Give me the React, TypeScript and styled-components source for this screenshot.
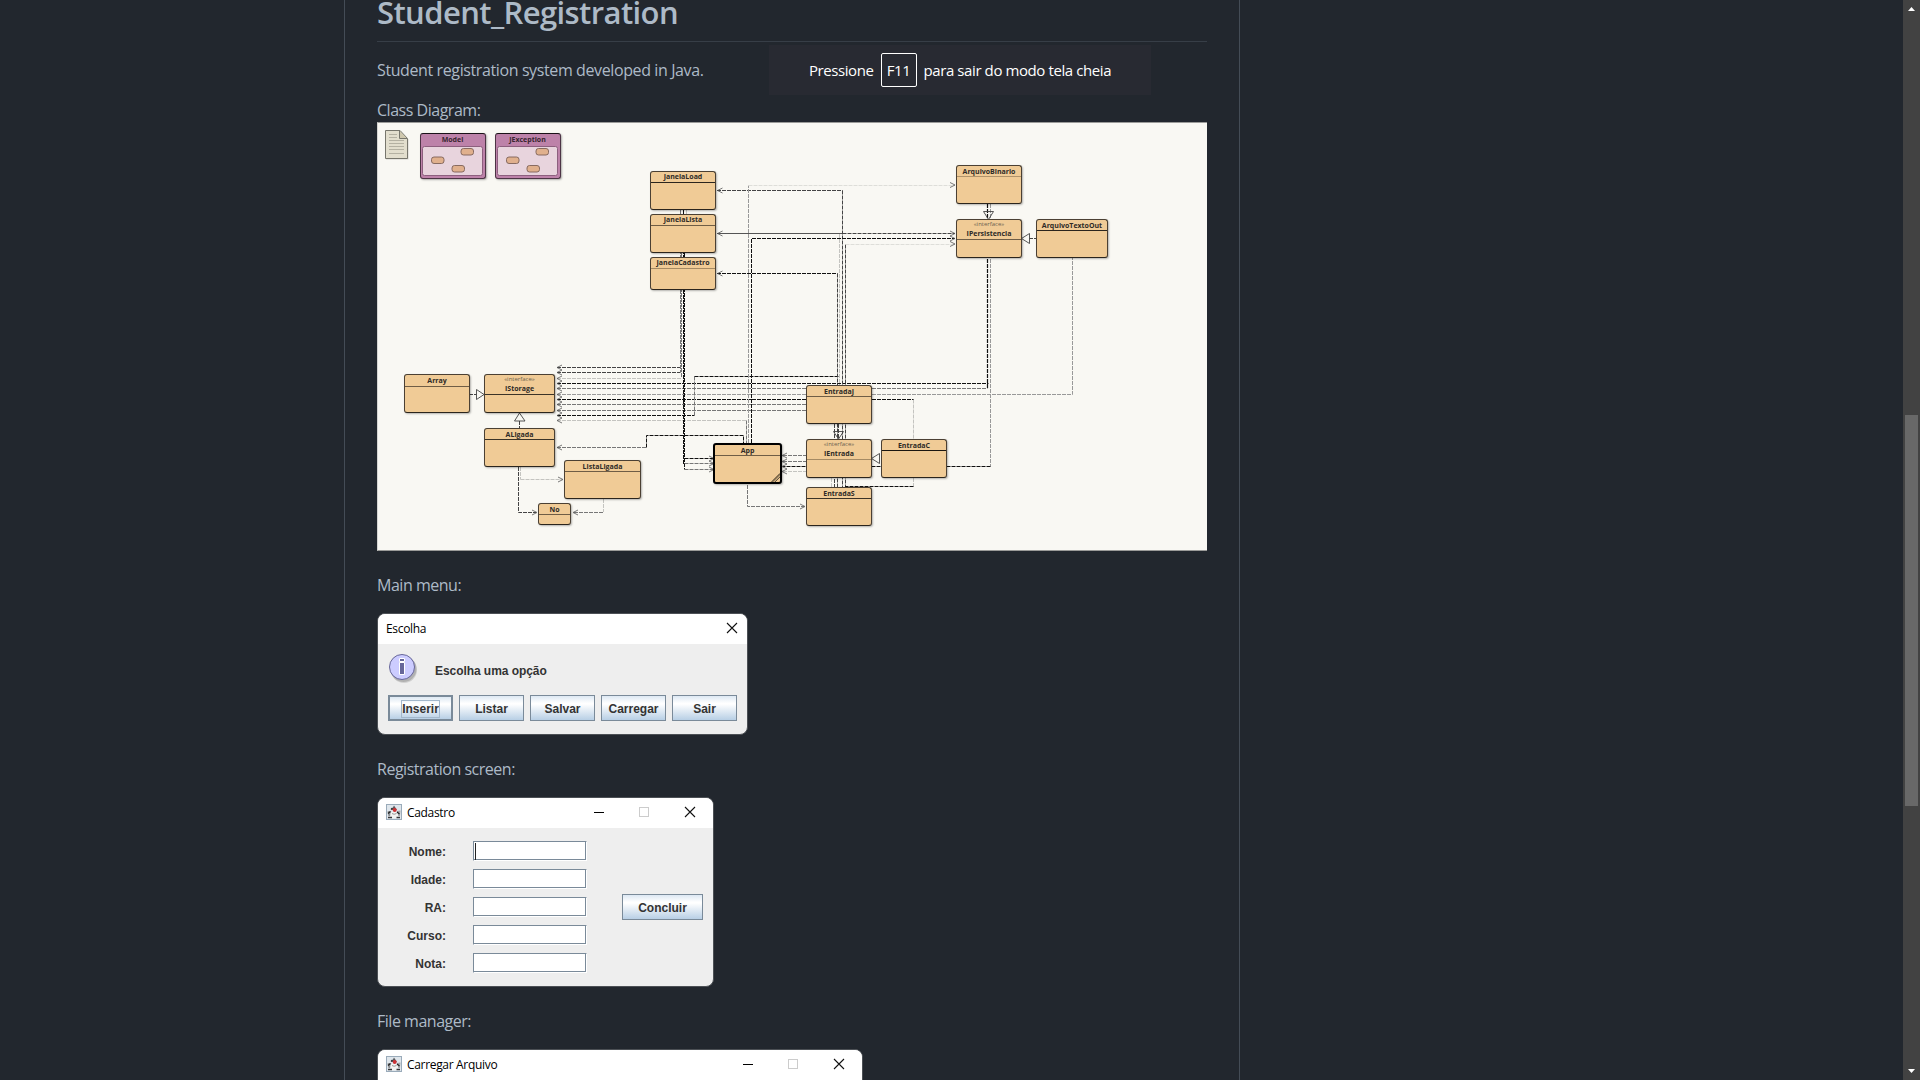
import React from 'react';
import styled, { createGlobalStyle, css } from 'styled-components';

const ui = `'Open Sans', 'Noto Sans', sans-serif`;
const swing = `'Liberation Sans', Arial, sans-serif`;

const GlobalStyle = createGlobalStyle`
  * { box-sizing: border-box; }
  html, body { margin: 0; background: #22272e; overflow: hidden; }
`;

const Page = styled.div`
  display: flex;
  justify-content: space-between;
  width: 1920px;
  height: 1080px;
  overflow: hidden;
  background: #22272e;
  color: #adbac7;
  font-family: ${ui};
`;

const Readme = styled.main`
  display: flex;
  flex-direction: column;
  align-items: flex-start;
  width: 896px;
  height: 1080px;
  margin-left: 344px;
  padding: 0 32px;
  border: solid #444c56;
  border-width: 0 1px;
  overflow: hidden;
`;

const Title = styled.h1`
  flex: none;
  width: 830px;
  height: 50px;
  margin: -8px 0 16px;
  border-bottom: 1px solid #373e47;
  font-size: 31px;
  font-weight: 600;
  line-height: 40px;
  letter-spacing: -0.6px;
`;

const Paragraph = styled.p<{ $gap: number; $track?: number }>`
  flex: none;
  margin: 0 0 ${(p) => p.$gap}px;
  font-size: 16px;
  line-height: 24px;
  letter-spacing: ${(p) => p.$track ?? -0.48}px;
  white-space: nowrap;
`;

/* ---------- class diagram ---------- */

const Canvas = styled.div`
  position: relative;
  flex: none;
  width: 830px;
  height: 429px;
  margin-bottom: 22px;
  background: #f9f8f3;
  border: solid #9b9b99;
  border-width: 1px 0 1px 1px;
  border-left-color: #d5d5d2;
`;

const Edges = styled.svg`
  position: absolute;
  left: -1px;
  top: -1px;
  width: 830px;
  height: 429px;
`;

const NodeBox = styled.div<{ $x: number; $y: number; $w: number; $h: number; $active?: boolean }>`
  position: absolute;
  left: ${(p) => p.$x - 378}px;
  top: ${(p) => p.$y - 123}px;
  width: ${(p) => p.$w}px;
  height: ${(p) => p.$h}px;
  background: #f0cb96;
  border: 1px solid #4b4033;
  border-bottom-color: #2b251d;
  border-radius: 3px;
  box-shadow: 1px 1px 2px rgba(0, 0, 0, 0.28);
  color: #2e2a26;
  font: 700 7px/11px ${ui};
  text-align: center;
  white-space: nowrap;
  ${(p) => p.$active && css`border: 2px solid #000;`}
`;

const NodeHead = styled.div<{ $h: number; $lift: number; $line: string }>`
  display: flex;
  flex-direction: column;
  align-items: center;
  justify-content: center;
  height: ${(p) => p.$h}px;
  padding-bottom: ${(p) => p.$lift}px;
  border-bottom: 1px solid ${(p) => p.$line};
`;

const Stereotype = styled.span`
  color: #6b624f;
  font-size: 6px;
  font-weight: 400;
  line-height: 8px;
`;

const Package = styled.div<{ $x: number }>`
  position: absolute;
  left: ${(p) => p.$x - 378}px;
  top: 10px;
  display: flex;
  flex-direction: column;
  justify-content: space-between;
  width: 66px;
  height: 46px;
  padding: 0 2px 2px 1px;
  background: #bd82a9;
  border: 1px solid #4d3445;
  border-top-color: #1b1218;
  border-radius: 3px;
  box-shadow: 1px 1px 2px rgba(0, 0, 0, 0.3);
  color: #38252f;
  font: 700 7px/11px ${ui};
  text-align: center;
`;

const PackageBody = styled.svg`
  width: 61px;
  height: 30px;
`;

type NodeSpec = { name: string; x: number; y: number; w: number; h?: number; head?: number; lift?: number; iface?: boolean; active?: boolean; line?: string };

const nodes: NodeSpec[] = [
  { name: 'JanelaLoad', x: 650, y: 171, w: 66, lift: 2, line: '#2b251d' },
  { name: 'JanelaLista', x: 650, y: 214, w: 66, lift: 2 },
  { name: 'JanelaCadastro', x: 650, y: 257, w: 66, h: 33, lift: 2, line: '#a58a63' },
  { name: 'ArquivoBinario', x: 956, y: 165, w: 66, line: '#b0936b' },
  { name: 'IPersistencia', x: 956, y: 219, w: 66, iface: true },
  { name: 'ArquivoTextoOut', x: 1036, y: 219, w: 72, line: '#2b251d' },
  { name: 'Array', x: 404, y: 374, w: 66, head: 12 },
  { name: 'IStorage', x: 484, y: 374, w: 71, iface: true, line: '#3b3327' },
  { name: 'ALigada', x: 484, y: 428, w: 71, line: '#3b3327' },
  { name: 'ListaLigada', x: 564, y: 460, w: 77 },
  { name: 'No', x: 538, y: 503, w: 33, h: 22 },
  { name: 'EntradaJ', x: 806, y: 385, w: 66 },
  { name: 'IEntrada', x: 806, y: 439, w: 66, iface: true, line: '#a58a63' },
  { name: 'EntradaS', x: 806, y: 487, w: 66, line: '#3b3327' },
  { name: 'EntradaC', x: 881, y: 439, w: 66, line: '#1b1610' },
  { name: 'App', x: 713, y: 443, w: 69, h: 41, active: true },
];

type EdgeSpec = [string, string, number?];
const K = '#111111';
const G = '#777777';
const L = '#c4c4c0';
const D = '#444444';

const edges: EdgeSpec[] = [
  // storage dependencies
  ['M557 367.5H680.5', D], ['M557 372.5H680.5', D], ['M557 378.5H681.5', L],
  ['M557 383.5H988.5', K], ['M557 388.5H987.5', G], ['M557 394.5H1072.5V258', '#999999'],
  ['M557 399.5H914', K], ['M913.5 399.5V439', L], ['M557 404.5H806', G], ['M557 410.5H806', G],
  ['M557 415.5H694.5', K], ['M694.5 415.5V376.5', G], ['M694.5 376.5H838.5', K],
  ['M557 420.5H746.5', L], ['M746.5 420.5V443', G],
  ['M557 447.5H646.5', G], ['M646.5 447.5V435.5H743.5V443', K],
  // window classes
  ['M680.5 210V372', G], ['M681.5 253V378', G], ['M683.5 210V464', K], ['M684.5 253V469.5', K],
  ['M686.5 210V214', L],
  ['M684.5 458.5H713', K], ['M684.5 463.5H713', G], ['M684.5 469.5H713', G],
  ['M717 190.5H842.5', D], ['M842.5 190.5V487', D],
  ['M717 273.5H837.5', K], ['M837.5 273.5V487', D],
  ['M839.5 234V385', L], ['M845.5 244.5V487', D], ['M845.5 244.5H955', '#deded9'],
  ['M842.5 233.5H955', D],
  ['M748.5 443V185.5', '#999999'], ['M748.5 185.5H955', '#deded9'],
  ['M751.5 443V238.5H955', K],
  // persistence
  ['M987.5 204V388', K, 1.2], ['M990.5 204V466.5', '#999999'], ['M990.5 466.5H783', K],
  // entries
  ['M834.5 424V487', D], ['M838.5 424V439', D], ['M831.5 478V487', L],
  ['M783 455.5H806', G], ['M783 461.5H806', G], ['M783 471.5H806', L],
  ['M913.5 478V486.5', L], ['M913.5 486.5H845', K],
  ['M747.5 485V506.5H804', G],
  ['M518.5 467V512.5H536', D], ['M520.5 467V479.5', L], ['M520.5 479.5H562', L],
  ['M603.5 499V512', L], ['M603 512.5H574', G],
  ['M469 394.5H477', D], ['M519.5 421V428', D], ['M1029 238.5H1036', D],
];

const arrowsLeft: [number, number][] = [
  [557, 367.5], [557, 372.5], [557, 378.5], [557, 383.5], [557, 388.5], [557, 394.5], [557, 399.5],
  [557, 404.5], [557, 410.5], [557, 415.5], [557, 420.5], [557, 447.5], [717.5, 190.5], [717.5, 233.5],
  [717.5, 273.5], [782, 455.5], [782, 461.5], [782, 466.5], [782, 471.5], [573, 512.5],
];
const arrowsRight: [number, number][] = [
  [955, 185], [955, 233.5], [955, 238.5], [955, 244], [714, 458.5], [714, 463.5], [714, 469.5],
  [805, 506.5], [537, 512.5], [563, 479.5],
];

const DiagramEdges = () => (
  <Edges viewBox="377 122 830 429" fill="none">
    {edges.map(([d, color, w], i) => (
      <path key={i} d={d} stroke={color} strokeWidth={w ?? 1} strokeDasharray="4 1" />
    ))}
    <path d="M717 233.5H842" stroke="#555" />
    {arrowsLeft.map(([x, y], i) => (
      <path key={i} d={`M${x + 5} ${y - 2.5}L${x} ${y}L${x + 5} ${y + 2.5}`} stroke="#555" strokeWidth="0.8" />
    ))}
    {arrowsRight.map(([x, y], i) => (
      <path key={i} d={`M${x - 5} ${y - 2.5}L${x} ${y}L${x - 5} ${y + 2.5}`} stroke="#555" strokeWidth="0.8" />
    ))}
    <g stroke="#444" strokeWidth="0.9" fill="#f9f8f3">
      <path d="M476.5 389.5V399.5L484 394.5Z" />
      <path d="M514.5 421H525L519.5 413Z" />
      <path d="M1029.5 233.5V243.5L1021.5 238.5Z" />
      <path d="M879.5 453.5V463.5L871.5 458.5Z" />
      <path d="M983.5 211.5H993.5L988.5 219.5Z" fill="none" />
      <path d="M833.5 431.5H843.5L838.5 439Z" fill="none" />
    </g>
    <g>
      <path d="M386 131.5h15l7.500 8v20H386z" fill="#000" opacity=".15" />
      <path d="M385.500 130.500H400L407.500 138.500V158.500H385.500Z" fill="#e2decd" stroke="#77766c" />
      <path d="M399.500 131V138.500H407" fill="#cfc8ae" stroke="#77766c" />
      <path d="M389 134.500h8M389 137.500h8M389 140.500h15M389 143.500h15M389 146.500h15M389 149.500h15M389 153.500h15" stroke="#b4b1a2" />
    </g>
  </Edges>
);

const PackageNode = ({ x, name }: { x: number; name: string }) => (
  <Package $x={x}>
    {name}
    <PackageBody viewBox="0 0 61 30">
      <rect x="0.500" y="0.500" width="60" height="29" rx="2" fill="#e8d4dd" stroke="#8d5f7e" />
      <g fill="#e0b08d" stroke="#7d6157" strokeWidth="0.900">
        <rect x="39" y="2.500" width="12.500" height="6.500" rx="2.500" />
        <rect x="9.500" y="11" width="12.500" height="6.500" rx="2.500" />
        <rect x="30" y="19.500" width="12.500" height="6.500" rx="2.500" />
      </g>
    </PackageBody>
  </Package>
);

const Fold = styled.svg`
  position: absolute;
  right: 0;
  bottom: 0;
  width: 9px;
  height: 9px;
`;

const ClassDiagram = () => (
  <Canvas>
    <DiagramEdges />
    <PackageNode x={420} name="Model" />
    <PackageNode x={495} name="JException" />
    {nodes.map((n) => (
      <NodeBox key={n.name} $x={n.x} $y={n.y} $w={n.w} $h={n.h ?? 39} $active={n.active}>
        <NodeHead $h={n.iface ? 20 : n.head ?? 11} $lift={n.lift ?? 0} $line={n.line ?? '#6f5d45'}>
          {n.iface && <Stereotype>«interface»</Stereotype>}
          {n.name}
        </NodeHead>
        {n.active && (
          <Fold viewBox="0 0 9 9">
            <path d="M0 9L9 0V3L3 9Z" fill="#a58a63" />
            <path d="M0.500 9L9 0.500M4 9L9 4" stroke="#3b3327" strokeWidth="0.800" />
          </Fold>
        )}
      </NodeBox>
    ))}
  </Canvas>
);

/* ---------- Java windows ---------- */

const Window = styled.section<{ $w: number; $h: number; $gap: number }>`
  display: flex;
  flex-direction: column;
  flex: none;
  width: ${(p) => p.$w}px;
  height: ${(p) => p.$h}px;
  margin-bottom: ${(p) => p.$gap}px;
  border: 1px solid #4c5055;
  border-radius: 8px;
  background: #eee;
  overflow: hidden;
  color: #333;
  font: 700 12px/15px ${swing};
`;

const TitleBar = styled.header<{ $right: number }>`
  display: flex;
  flex: none;
  align-items: center;
  height: 30px;
  padding: 0 ${(p) => p.$right}px 2px 8px;
  background: #fff;
`;

const Caption = styled.span`
  flex: 1;
  padding-top: 2px;
  color: #000;
  font: 400 12px/16px ${ui};
  letter-spacing: -0.32px;
`;

const Controls = styled.svg`
  width: 102px;
  height: 12px;
`;

const CupIcon = styled.svg`
  width: 16px;
  height: 16px;
  margin-right: 5px;
`;

const JavaIcon = () => (
  <CupIcon viewBox="0 0 16 16">
    <rect x="0.500" y="0.500" width="15" height="15" fill="#dfe6ec" stroke="#9aabba" />
    <path d="M5.500 6L8 1.500L11 6Z" fill="#5a5a5e" />
    <path d="M1.500 7.500Q3 6.500 5.500 8L5 12L2.500 12Z" fill="#8b8d90" />
    <path d="M11 7L14.500 6.500L14 12L11.500 12Z" fill="#a3a5a8" />
    <path d="M4.500 8.500Q8 6.500 11.500 8.500L12.500 13.500Q8 15 4 13.500Z" fill="#f3f3f1" />
    <path d="M2 9.500L4.500 7.500M11 8L13.500 10M5 5.500L6.500 4" stroke="#222" strokeWidth="1.200" />
    <path d="M2 13.500H6M10.500 13.500H14" stroke="#38383a" strokeWidth="1.400" />
    <path d="M6 9.500Q8 11 10.500 9.500" stroke="#9a9a9a" fill="none" />
    <circle cx="8.700" cy="5.900" r="2" fill="#cf3234" />
  </CupIcon>
);

const WindowControls = () => (
  <Controls viewBox="0 0 102 12" fill="none">
    <path d="M0 6.500H10" stroke="#000" />
    <rect x="45.500" y="1.500" width="9" height="9" stroke="#ccc" />
    <path d="M91 1L101 11M101 1L91 11" stroke="#111" strokeWidth="1.100" />
  </Controls>
);

const CloseIcon = styled.svg`
  width: 12px;
  height: 12px;
`;

const Message = styled.div`
  display: flex;
  align-items: center;
  height: 51px;
  padding-left: 10px;
  gap: 17px;
`;

const MessageText = styled.span`
  padding-top: 3px;
  letter-spacing: -0.06px;
`;

const InfoIcon = styled.svg`
  width: 30px;
  height: 32px;
  margin-bottom: 4px;
`;

const ButtonRow = styled.div`
  display: flex;
  gap: 6px;
  padding-left: 10px;
`;

const SwingButton = styled.button<{ $w: number; $focus?: boolean }>`
  display: flex;
  align-items: center;
  justify-content: center;
  width: ${(p) => p.$w}px;
  height: 26px;
  padding: 2px 0 0;
  border: ${(p) => (p.$focus ? 2 : 1)}px solid #7a8a99;
  border-radius: 0;
  background: linear-gradient(#dde8f3 0%, #ffffff 30%, #ffffff 34%, #b8cfe5 100%);
  color: #333;
  font: 700 12px/15px ${swing};
`;

const FocusRing = styled.span`
  padding: 1px 0 0;
  outline: 1px solid #a3b8cc;
`;

const FormBody = styled.div`
  display: flex;
  align-items: center;
  justify-content: space-between;
  height: 158px;
  padding: 1px 10px 1px 25px;
`;

const Fields = styled.div`
  display: grid;
  grid-template-columns: 43px 114px;
  grid-auto-rows: 20px;
  gap: 8px 27px;
`;

const Label = styled.label`
  padding-top: 4px;
  text-align: right;
`;

const Input = styled.span<{ $caret?: boolean }>`
  display: flex;
  align-items: center;
  height: 20px;
  padding-left: 1px;
  background: #fff;
  border: 1px solid #7a8a99;
  border-right: 1px solid #fff;
  border-bottom: 1px solid #fff;
  box-shadow: inset -1px -1px 0 #7a8a99;
  &::before {
    content: '';
    width: 1px;
    height: 17px;
    background: ${(p) => (p.$caret ? '#222' : 'transparent')};
  }
`;

/* ---------- browser overlay and scrollbar ---------- */

const FullscreenHint = styled.aside`
  position: absolute;
  left: 769px;
  top: 45px;
  display: flex;
  align-items: center;
  justify-content: center;
  gap: 7px;
  width: 382px;
  height: 50px;
  background: #282a32;
  color: #fff;
  font: 400 15px/20px ${ui};
  letter-spacing: -0.41px;
  white-space: nowrap;
`;

const Key = styled.kbd`
  display: flex;
  align-items: center;
  justify-content: center;
  width: 36px;
  height: 34px;
  border: 1px solid #fff;
  border-radius: 2px;
  font: inherit;
`;

const Scrollbar = styled.div`
  display: flex;
  flex-direction: column;
  align-items: center;
  width: 17px;
  height: 1080px;
  background: #424242;
`;

const ScrollArrow = styled.svg`
  flex: none;
  width: 17px;
  height: 17px;
`;

const Track = styled.div`
  flex: 1;
  padding-top: 398px;
`;

const Thumb = styled.div`
  width: 13px;
  height: 391px;
  background: #686868;
`;

export default function App() {
  return (
    <>
      <GlobalStyle />
      <Page>
        <Readme>
          <Title>Student_Registration</Title>
          <Paragraph $gap={16} $track={-0.39}>Student registration system developed in Java.</Paragraph>
          <Paragraph $gap={0}>Class Diagram:</Paragraph>
          <ClassDiagram />
          <Paragraph $gap={16}>Main menu:</Paragraph>
          <Window $w={371} $h={122} $gap={22}>
            <TitleBar $right={9}>
              <Caption>Escolha</Caption>
              <CloseIcon viewBox="0 0 12 12">
                <path d="M1 1L11 11M11 1L1 11" stroke="#111" strokeWidth="1.100" />
              </CloseIcon>
            </TitleBar>
            <Message>
              <InfoIcon viewBox="0 0 30 32">
                <circle cx="16" cy="18" r="13" fill="#000" opacity=".12" />
                <circle cx="15.500" cy="17" r="13" fill="#000" opacity=".15" />
                <circle cx="14" cy="15" r="12.500" fill="#ccccff" stroke="#666699" />
                <path d="M11.500 6.500h5v3h-5zM11.500 10.500h5v12h-5z" fill="#666699" stroke="#fff" strokeWidth="1" />
              </InfoIcon>
              <MessageText>Escolha uma opção</MessageText>
            </Message>
            <ButtonRow>
              <SwingButton $w={65} $focus><FocusRing>Inserir</FocusRing></SwingButton>
              {['Listar', 'Salvar', 'Carregar', 'Sair'].map((name) => (
                <SwingButton key={name} $w={65}>{name}</SwingButton>
              ))}
            </ButtonRow>
          </Window>
          <Paragraph $gap={16}>Registration screen:</Paragraph>
          <Window $w={337} $h={190} $gap={22}>
            <TitleBar $right={17}>
              <JavaIcon />
              <Caption>Cadastro</Caption>
              <WindowControls />
            </TitleBar>
            <FormBody>
              <Fields>
                {['Nome:', 'Idade:', 'RA:', 'Curso:', 'Nota:'].map((name, i) => (
                  <React.Fragment key={name}>
                    <Label>{name}</Label>
                    <Input $caret={i === 0} />
                  </React.Fragment>
                ))}
              </Fields>
              <SwingButton $w={81}>Concluir</SwingButton>
            </FormBody>
          </Window>
          <Paragraph $gap={16}>File manager:</Paragraph>
          <Window $w={486} $h={300} $gap={0}>
            <TitleBar $right={17}>
              <JavaIcon />
              <Caption>Carregar Arquivo</Caption>
              <WindowControls />
            </TitleBar>
          </Window>
        </Readme>
        <Scrollbar>
          <ScrollArrow viewBox="0 0 17 17"><path d="M5 11L8.500 7L12 11Z" fill="#fff" /></ScrollArrow>
          <Track><Thumb /></Track>
          <ScrollArrow viewBox="0 0 17 17"><path d="M5 6L8.500 10L12 6Z" fill="#fff" /></ScrollArrow>
        </Scrollbar>
        <FullscreenHint>
          <span>Pressione</span>
          <Key>F11</Key>
          <span>para sair do modo tela cheia</span>
        </FullscreenHint>
      </Page>
    </>
  );
}
